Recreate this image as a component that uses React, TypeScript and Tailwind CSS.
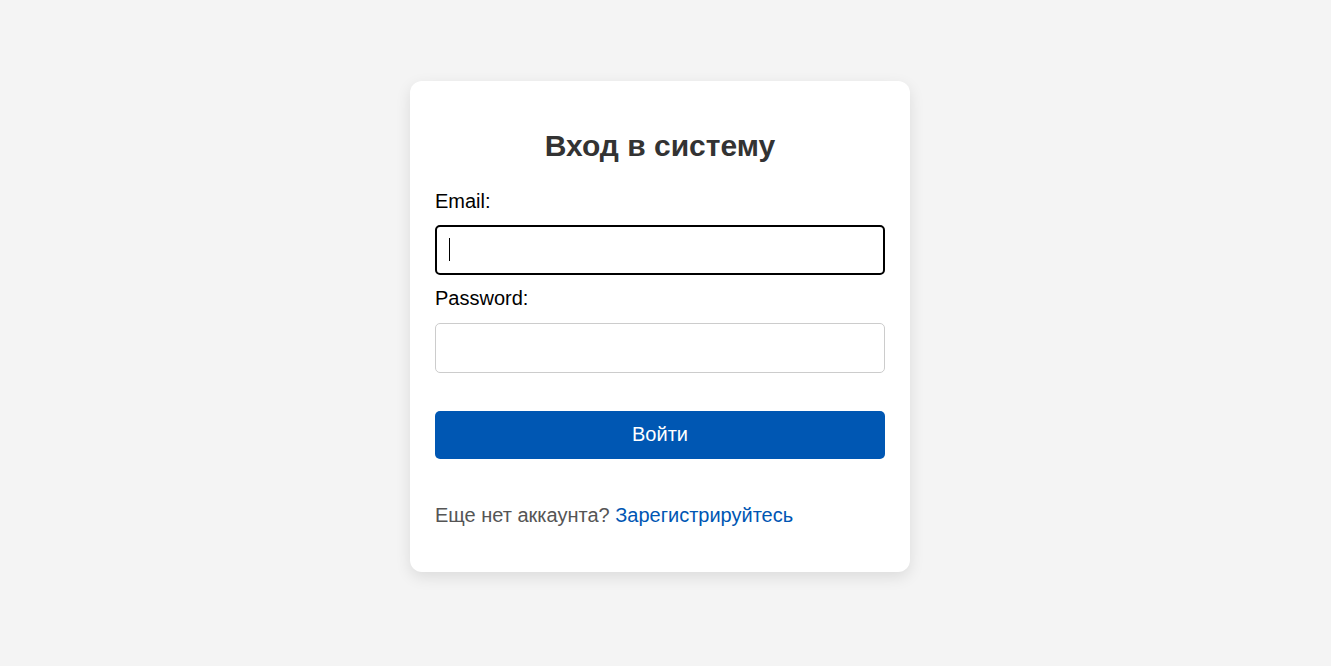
import React from "react";

const App = () => {
  return (
    <div className="min-h-screen w-full bg-[#f4f4f4] flex justify-center pt-[81px] pr-[11px] font-['Liberation_Sans',Arial,sans-serif]">
      <div className="w-[500px] h-[491px] bg-white rounded-[12px] shadow-[0_5px_15px_rgba(0,0,0,0.1)] p-[25px] flex flex-col">
        <h2 className="mt-[23px] mb-[27px] text-[30px] leading-[34px] font-bold text-center text-[#333]">
          Вход в систему
        </h2>

        <label className="block text-[20px] leading-[23px] text-black">Email:</label>
        <div className="relative mt-[12px]">
          <input
            type="email"
            className="block w-full h-[50px] px-[12px] border-2 border-black rounded-[5px] text-[20px] outline-none"
          />
          <span className="pointer-events-none absolute left-[14px] top-[13px] h-[23px] w-px bg-black" />
        </div>

        <label className="block mt-[12px] text-[20px] leading-[23px] text-black">Password:</label>
        <input
          type="password"
          className="block mt-[13px] w-full h-[50px] px-[12px] border border-[#ccc] rounded-[5px] text-[20px] outline-none"
        />

        <button className="mt-[38px] h-[48px] w-full bg-[#0057b3] text-white text-[20px] leading-[23px] rounded-[5px] pb-[1px]">
          Войти
        </button>

        <p className="mt-[45px] text-[20px] leading-[23px] text-[#555]">
          Еще нет аккаунта?{" "}
          <a href="#" className="text-[#0056b3]">
            Зарегистрируйтесь
          </a>
        </p>
      </div>
    </div>
  );
};

export default App;
